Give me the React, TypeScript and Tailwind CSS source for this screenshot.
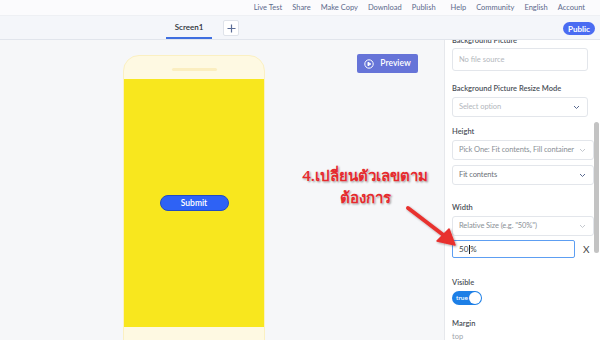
import React from 'react';

const NAV = ['Live Test', 'Share', 'Make Copy', 'Download', 'Publish', 'Help', 'Community', 'English', 'Account'];

const Chevron = ({ color }: { color: string }) => (
  <svg width="7" height="5" viewBox="0 0 7 5" fill="none" stroke={color} strokeWidth="1">
    <path d="M1 1l2.5 2.5L6 1" />
  </svg>
);

const Label = ({ children }: { children: React.ReactNode }) => (
  <div className="text-[7.5px] font-semibold text-[#4a4f57] leading-[10px] whitespace-nowrap">{children}</div>
);

const Select = ({ text, textColor, chevron, wide }: { text: string; textColor: string; chevron: string; wide?: boolean }) => (
  <div className={`flex items-center justify-between h-[20px] border border-[#e3e6eb] rounded-[3px] bg-white pl-[6px] pr-[7px] ${wide ? 'w-[142px]' : 'w-[136px]'}`}>
    <span className="text-[7.5px] whitespace-nowrap tracking-[-0.1px]" style={{ color: textColor }}>{text}</span>
    <Chevron color={chevron} />
  </div>
);

const App = () => {
  return (
    <div className="w-[600px] h-[340px] overflow-hidden bg-[#f6f7f9] font-['Lato','Open_Sans',sans-serif] relative">
      {/* top links */}
      <div className="h-[16px] bg-[#fbfbfd] flex items-center justify-end pr-[15px] gap-[10px] border-b border-[#eef0f4]">
        {NAV.map(n => (
          <span key={n} className={`text-[7.5px] text-[#5b6a8c] leading-none ${n === 'Help' ? 'ml-[5px]' : ''}`}>{n}</span>
        ))}
      </div>
      {/* tab bar */}
      <div className="h-[24px] bg-[#f4f6fa] border-b border-[#e1e5ec] flex items-end relative">
        <div className="ml-[166px] w-[46px] h-[23px] flex items-center justify-center border-b-2 border-[#3f6fe0] text-[8px] font-semibold text-[#2b2f36]">Screen1</div>
        <div className="ml-[11px] mb-[3px] w-[16px] h-[16px] bg-white border border-[#dfe3ea] rounded-[2px] flex items-center justify-center">
          <svg width="9" height="9" viewBox="0 0 9 9" stroke="#5a6c96" strokeWidth="1.2"><path d="M4.5 0.5v8M0.5 4.5h8" /></svg>
        </div>
        <div className="ml-auto mr-[5px] mb-[4px] h-[13px] w-[32px] rounded-full bg-[#4a6cf2] flex items-center justify-center text-[8px] font-bold text-white">Public</div>
      </div>
      {/* main */}
      <div className="flex h-[300px]">
        <div className="w-[444px] relative">
          <div className="ml-[123px] mt-[15px] w-[142px] h-[300px] bg-[#fef9e2] border border-[#fbf0c2] rounded-t-[16px] flex flex-col">
            <div className="h-[23px] flex justify-center pt-[12px]">
              <div className="w-[45px] h-[3px] rounded-full bg-[#fbeec0]" />
            </div>
            <div className="h-[248px] bg-[#f8e71e] flex justify-center pt-[116px]">
              <div className="w-[69px] h-[16px] rounded-full bg-[#2e62f5] border border-[#1f4bc4] flex items-center justify-center text-[8.5px] font-semibold text-white">Submit</div>
            </div>
          </div>
          <div className="absolute left-[357px] top-[14px] w-[61px] h-[19px] rounded-[2px] bg-[#6674d8] flex items-center justify-center gap-[6px] text-[8.5px] font-semibold text-white">
            <svg width="10" height="10" viewBox="0 0 10 10" fill="none" stroke="white" strokeWidth="1">
              <circle cx="5" cy="5" r="4.2" />
              <path d="M4 3.2v3.6l2.8-1.8z" fill="white" />
            </svg>
            Preview
          </div>
          <div className="absolute left-[285px] top-[124px] w-[160px] text-center text-[15px] leading-[22px] font-semibold text-[#e52a2e] whitespace-nowrap font-['Noto_Sans','DejaVu_Sans',sans-serif] [text-shadow:0_0_2px_#fff,1px_1px_2px_rgba(0,0,0,0.45)]">
            <div>4.เปลี่ยนตัวเลขตาม</div>
            <div>ต้องการ</div>
          </div>
        </div>
        {/* properties panel */}
        <div className="flex-1 bg-white border-l border-[#e6e8ec] relative overflow-hidden pl-[7px]">
          <div className="mt-[-4px]"><Label>Background Picture</Label></div>
          <div className="mt-[2px] w-[136px] h-[23px] border border-[#e3e6eb] rounded-[3px] flex items-center pl-[6px] text-[7.5px] text-[#b3b7bd]">No file source</div>
          <div className="mt-[13px]"><Label>Background Picture Resize Mode</Label></div>
          <div className="mt-[3px]"><Select text="Select option" textColor="#b3b7bd" chevron="#5a6a90" /></div>
          <div className="mt-[10px]"><Label>Height</Label></div>
          <div className="mt-[3px]"><Select text="Pick One: Fit contents, Fill container" textColor="#8a8f96" chevron="#c4c8ce" wide /></div>
          <div className="mt-[5px]"><Select text="Fit contents" textColor="#6b7078" chevron="#5a6a90" wide /></div>
          <div className="mt-[18px]"><Label>Width</Label></div>
          <div className="mt-[3px]"><Select text={'Relative Size (e.g. "50%")'} textColor="#8a8f96" chevron="#c4c8ce" wide /></div>
          <div className="mt-[4px] flex items-center">
            <div className="w-[123px] h-[18px] border border-[#5d9ef2] rounded-[2px] flex items-center pl-[6px] text-[8px] text-[#3a3f46]">
              50<span className="w-px h-[9px] bg-[#222] mx-[0.5px]" />%
            </div>
            <span className="ml-[8px] text-[10px] text-[#444]">X</span>
          </div>
          <div className="mt-[20px]"><Label>Visible</Label></div>
          <div className="mt-[3px] w-[30px] h-[14px] rounded-full bg-[#1d7fe6] flex items-center justify-between pl-[4px] pr-[1px]">
            <span className="text-[6.5px] font-semibold text-white leading-none">true</span>
            <div className="w-[12px] h-[12px] rounded-full bg-white" />
          </div>
          <div className="mt-[14px]"><Label>Margin</Label></div>
          <div className="mt-[3px] text-[7.5px] text-[#a0a4aa] leading-[10px]">top</div>
          <div className="absolute right-[1px] top-[82px] w-[5px] h-[131px] rounded-full bg-[#c3c3c3]" />
        </div>
      </div>
      <svg className="absolute left-0 top-0 pointer-events-none" width="600" height="340">
        <defs>
          <filter id="sh" x="-20%" y="-20%" width="140%" height="140%">
            <feDropShadow dx="1" dy="1" stdDeviation="1" floodColor="#000" floodOpacity="0.35" />
          </filter>
        </defs>
        <g filter="url(#sh)">
          <line x1="408" y1="208" x2="446" y2="237" stroke="#e8302f" strokeWidth="4" strokeLinecap="round" />
          <path d="M455 245 L437 241 L449 229 Z" fill="#e8302f" stroke="#e8302f" strokeWidth="1.5" strokeLinejoin="round" />
        </g>
      </svg>
    </div>
  );
};

export default App;
